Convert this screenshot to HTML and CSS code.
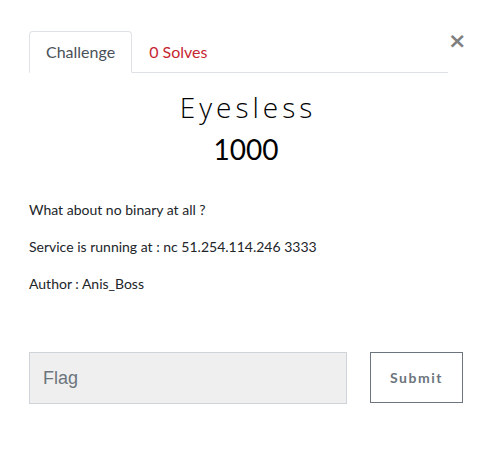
FILE: index.html
```html
<!DOCTYPE html>
<html>
<head>
<meta charset="utf-8">
<link rel="stylesheet" href="styles.css">
</head>
<body>
<div class="modal">
  <div class="header">
    <ul class="tabs">
      <li class="tab active">Challenge</li>
      <li class="tab solves">0 Solves</li>
    </ul>
    <button class="close">×</button>
  </div>
  <h2 class="title">Eyesless</h2>
  <h3 class="value">1000</h3>
  <div class="desc">
    <p>What about no binary at all ?</p>
    <p>Service is running at : nc 51.254.114.246 3333</p>
    <p>Author : Anis_Boss</p>
  </div>
  <form class="submit-row">
    <input class="flag" type="text" placeholder="Flag">
    <button class="btn" type="button">Submit</button>
  </form>
</div>
</body>
</html>
```
FILE: styles.css
```css
html, body {
  margin: 0;
  padding: 0;
  background: #fff;
}
body {
  font-family: Lato, "Liberation Sans", sans-serif;
  font-size: 14px;
  line-height: 1.5;
  color: #212529;
}
.modal {
  padding: 31px 28px 0 29px;
}
.header {
  display: flex;
  align-items: flex-start;
}
.tabs {
  flex: 1;
  display: flex;
  list-style: none;
  margin: 0;
  padding: 0;
  border-bottom: 1px solid #dee2e6;
}
.tab {
  font-size: 16px;
  line-height: 24px;
  padding: 8px 16px;
  border: 1px solid transparent;
  border-top-left-radius: 4px;
  border-top-right-radius: 4px;
  margin-bottom: -1px;
}
.tab.active {
  color: #495057;
  border-color: #dee2e6 #dee2e6 #fff;
  background: #fff;
}
.tab.solves {
  color: #c62631;
}
.close {
  flex: 0 0 15px;
  width: 15px;
  padding: 0;
  margin: -1px 0 0;
  border: 0;
  background: none;
  font-family: "DejaVu Sans", sans-serif;
  font-size: 22px;
  font-weight: 700;
  line-height: 22px;
  color: #808080;
  text-align: center;
  overflow: visible;
}
.title {
  margin: 18px 0 0;
  padding-left: 4px;
  text-align: center;
  font-family: "Open Sans", Lato, sans-serif;
  font-size: 28px;
  font-weight: 300;
  line-height: 1.2;
  letter-spacing: 4px;
  color: #000;
}
.value {
  margin: 8px 0 0;
  text-align: center;
  font-size: 28px;
  font-weight: 400;
  line-height: 1.2;
  color: #000;
}
.desc {
  margin-top: 33px;
}
.desc p {
  margin: 0 0 16px;
}
.desc p:last-child {
  margin-bottom: 0;
}
.submit-row {
  margin-top: 58px;
  display: flex;
  gap: 23px;
}
.flag {
  box-sizing: border-box;
  width: 318px;
  height: 52px;
  margin: 0;
  padding: 0 13px;
  border: 1px solid #ced4da;
  background: #efefef;
  font-family: "Liberation Sans", Arial, sans-serif;
  font-size: 18px;
  color: #495057;
  outline: none;
}
.flag::placeholder {
  color: #6c757d;
}
.btn {
  box-sizing: border-box;
  width: 93px;
  height: 51px;
  margin: 0;
  border: 1px solid #6c757d;
  background: #fff;
  font-family: Lato, sans-serif;
  font-size: 14px;
  font-weight: 700;
  letter-spacing: 1.5px;
  color: #6c757d;
}
```
